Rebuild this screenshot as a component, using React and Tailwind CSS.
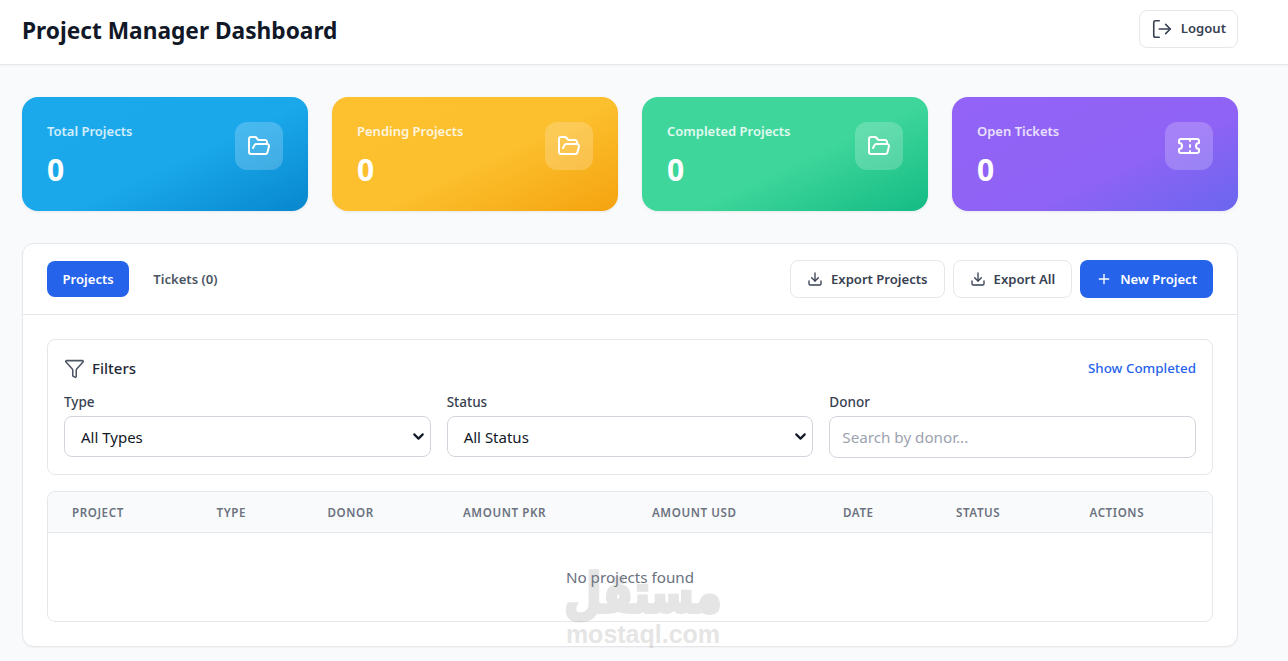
import React from 'react';
import { LogOut, FolderOpen, Ticket, Download, Plus, Filter, ChevronDown } from 'lucide-react';

const STATS = [
  { label: 'Total Projects', icon: FolderOpen, bg: 'bg-[linear-gradient(155deg,#1ba9ec_0%,#1aa8eb_55%,#0887cd_100%)]', labelColor: 'text-white/80' },
  { label: 'Pending Projects', icon: FolderOpen, bg: 'bg-[linear-gradient(155deg,#fdc02f_0%,#fcbf2d_55%,#f5a30f_100%)]', labelColor: 'text-white/85' },
  { label: 'Completed Projects', icon: FolderOpen, bg: 'bg-[linear-gradient(155deg,#3fd69c_0%,#3ed69b_55%,#14bb84_100%)]', labelColor: 'text-white/85' },
  { label: 'Open Tickets', icon: Ticket, bg: 'bg-[linear-gradient(155deg,#9263f6_0%,#8f63f5_60%,#6a66ee_100%)]', labelColor: 'text-white/80' },
];

const COLUMNS = [
  { name: 'Project', width: 'w-[144.5px]' },
  { name: 'Type', width: 'w-[111px]' },
  { name: 'Donor', width: 'w-[135.5px]' },
  { name: 'Amount PKR', width: 'w-[189px]' },
  { name: 'Amount USD', width: 'w-[191px]' },
  { name: 'Date', width: 'w-[113px]' },
  { name: 'Status', width: 'w-[133.5px]' },
  { name: 'Actions', width: 'flex-1' },
];

const StatCard = ({ label, icon: Icon, bg, labelColor }) => (
  <div className={`${bg} h-[114px] rounded-2xl p-[25px] flex justify-between shadow-[0_1px_3px_rgba(0,0,0,0.08)]`}>
    <div>
      <p className={`text-[13px] leading-5 font-semibold -mt-[1px] ${labelColor}`}>{label}</p>
      <p className="text-[30px] leading-9 font-bold text-white mt-[11px]">0</p>
    </div>
    <div className="w-12 h-12 rounded-xl bg-white/20 flex items-center justify-center">
      <Icon size={24} strokeWidth={2} className="text-white" />
    </div>
  </div>
);

const OutlineButton = ({ children }) => (
  <button className="h-[38px] px-4 flex items-center gap-2 rounded-lg bg-white border border-[#e5e7eb] text-[13.1px] font-semibold text-[#374151]">
    {children}
  </button>
);

const FieldSelect = ({ label, value }) => (
  <div>
    <label className="block text-[13.5px] leading-5 font-medium text-[#374151] mb-1">{label}</label>
    <div className="h-[41px] pl-4 pr-[3px] flex items-center justify-between rounded-lg bg-white border border-[#d1d5db] text-[15px] text-[#111827]">
      <span className="pt-[1px]">{value}</span>
      <ChevronDown size={17} strokeWidth={3} className="text-[#111827]" />
    </div>
  </div>
);

export default function App() {
  return (
    <div className="relative h-[661px] overflow-hidden bg-[#f9fafb] font-['Noto_Sans',sans-serif]">
      <header className="h-[65px] bg-white border-b border-[#e5e7eb] shadow-[0_1px_2px_rgba(0,0,0,0.04)]">
        <div className="w-[1260px] h-[58px] px-[22px] flex items-center justify-between">
          <h1 className="text-[22.7px] font-bold text-[#111827] pt-[5px]">Project Manager Dashboard</h1>
          <button className="h-[38px] pl-[11px] pr-[11px] flex items-center gap-2 rounded-lg bg-white border border-[#e5e7eb] text-[13.1px] font-semibold text-[#374151]">
            <LogOut size={22} strokeWidth={1.75} />
            Logout
          </button>
        </div>
      </header>

      <main className="w-[1260px] px-[22px] pt-8">
        <div className="grid grid-cols-4 gap-6">
          {STATS.map(s => <StatCard key={s.label} {...s} />)}
        </div>

        <section className="mt-8 bg-white rounded-xl border border-[#e5e7eb] shadow-[0_1px_2px_rgba(0,0,0,0.04)]">
          <div className="h-[71px] px-6 flex items-center justify-between border-b border-[#e5e7eb]">
            <div className="flex items-center gap-2">
              <button className="h-9 pt-[1px] px-[15.5px] rounded-lg bg-[#2563eb] text-white text-[13.1px] font-semibold">Projects</button>
              <button className="h-9 pt-[1px] px-4 rounded-lg text-[#4b5563] text-[13.1px] font-semibold">Tickets (0)</button>
            </div>
            <div className="flex items-center gap-2">
              <OutlineButton><Download size={16} strokeWidth={2} /> <span className="pt-[1px]">Export Projects</span></OutlineButton>
              <OutlineButton><Download size={16} strokeWidth={2} /> <span className="pt-[1px]">Export All</span></OutlineButton>
              <button className="h-[38px] px-4 flex items-center gap-2 rounded-lg bg-[#2563eb] text-white text-[13.1px] font-semibold">
                <Plus size={16} strokeWidth={2} /> <span className="pt-[1px]">New Project</span>
              </button>
            </div>
          </div>

          <div className="px-6 pt-6 pb-6">
            <div className="h-[136px] rounded-lg border border-[#e5e7eb] px-4 pt-4">
              <div className="flex items-center justify-between h-6">
                <div className="flex items-center gap-[7px]">
                  <Filter size={21} strokeWidth={1.75} className="text-[#4b5563]" />
                  <span className="text-[15px] font-medium text-[#1f2937]">Filters</span>
                </div>
                <button className="text-[13.4px] font-medium text-[#2563eb]">Show Completed</button>
              </div>
              <div className="grid grid-cols-3 gap-4 mt-[12px]">
                <FieldSelect label="Type" value="All Types" />
                <FieldSelect label="Status" value="All Status" />
                <div>
                  <label className="block text-[13.5px] leading-5 font-medium text-[#374151] mb-1">Donor</label>
                  <input
                    placeholder="Search by donor..."
                    className="w-full h-[42px] px-3 rounded-lg bg-white border border-[#d1d5db] text-[15.2px] outline-none placeholder:text-[#9ca3af]"
                  />
                </div>
              </div>
            </div>

            <div className="mt-4 h-[131px] rounded-lg border border-[#e5e7eb] overflow-hidden">
              <div className="h-[41px] pt-[1px] flex items-center pl-6 bg-[#f9fafb] border-b border-[#e5e7eb]">
                {COLUMNS.map(c => (
                  <div key={c.name} className={`${c.width} text-[11.6px] font-semibold uppercase tracking-wider text-[#6b7280]`}>{c.name}</div>
                ))}
              </div>
              <p className="pt-[32px] text-center text-[15.2px] leading-6 text-[#6b7280]">No projects found</p>
            </div>
          </div>
        </section>
      </main>

      <div className="absolute left-[556px] top-[570px] w-[174px] flex flex-col items-center pointer-events-none select-none text-[#808080] opacity-20 font-bold">
        <span className="text-[43px] leading-[50px] scale-y-125 -translate-y-[2px] [-webkit-text-stroke:3px_#808080] font-['DejaVu_Sans',sans-serif]" dir="rtl">مستقل</span>
        <span className="text-[25px] leading-7 font-['Liberation_Sans',sans-serif]">mostaql.com</span>
      </div>
    </div>
  );
}
